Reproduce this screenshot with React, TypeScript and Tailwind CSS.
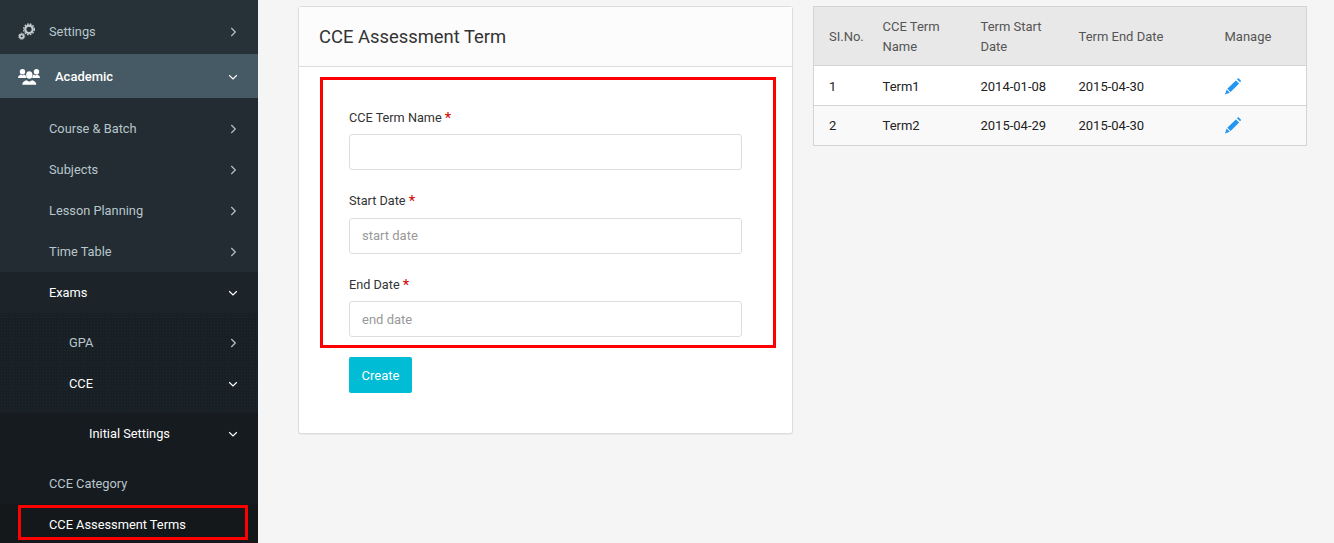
import React from "react";

const Chev = ({ open, white }: { open?: boolean; white?: boolean }) => (
  <svg width="12" height="12" viewBox="0 0 12 12" fill="none" stroke={white ? "#ffffff" : "#b4c3ca"} strokeWidth="1.2" className="shrink-0">
    {open ? <path d="M2.2 4.3 6 8l3.800-3.700" /> : <path d="M4.300 2 8.300 6l-4 4" />}
  </svg>
);

const Gears = () => (
  <svg width="18" height="18" viewBox="0 0 18 18" className="shrink-0">
    <g fill="none" stroke="#c3ccd1">
      <circle cx="11" cy="6.300" r="3.700" strokeWidth="2.200" />
      <circle cx="11" cy="6.300" r="5.300" strokeWidth="1.400" strokeDasharray="1.700 1.100" />
      <circle cx="3.700" cy="13.300" r="1.900" strokeWidth="1.700" />
      <circle cx="3.700" cy="13.300" r="3.100" strokeWidth="1" strokeDasharray="1.100 0.800" />
    </g>
  </svg>
);

const Users = () => (
  <svg width="22" height="16" viewBox="0 0 22 16" fill="#ffffff" className="shrink-0">
    <circle cx="4.500" cy="2.700" r="2.700" />
    <path d="M0 9c0-2 1.500-3 3-3.500l1.500 1 1.500-1c1.500.5 3 1.500 3 3.500z" />
    <circle cx="18.500" cy="2.700" r="2.700" />
    <path d="M22 9c0-2-1.500-3-3-3.500l-1.500 1-1.500-1c-1.500.5-3 1.500-3 3.500z" />
    <g stroke="#455a64" strokeWidth="1" paintOrder="stroke">
      <ellipse cx="11.300" cy="6" rx="3.200" ry="3.800" />
      <path d="M4.300 15.800c0-3 2.200-4 4.200-4.600l2.800 1.500 2.800-1.500c2 .6 4.200 1.600 4.200 4.600z" />
    </g>
  </svg>
);

const Pencil = ({ className }: { className?: string }) => (
  <svg width="18" height="17" viewBox="0 0 18 17" fill="#2196f3" className={`-ml-[1px] shrink-0 ${className ?? ""}`}>
    <path d="M3.300 10.700 11.900 2.400l3.200 3.200-8.500 8.400z" />
    <path d="M2.600 11.500 5.800 14.700 1 16.400z" />
    <path d="M13 1.300 14.300 0 17.200 2.900 16 4.200z" />
  </svg>
);

const Row = ({ label, indent = "pl-[49px]", open, white }: { label: string; indent?: string; open?: boolean; white?: boolean }) => (
  <div className={`flex h-[41px] items-center justify-between pr-[19px] text-[12.8px] ${indent} ${white ? "text-white" : "text-[#b9c6cc]"}`}>
    <span>{label}</span>
    {open !== undefined && <Chev open={open} white={white} />}
  </div>
);

const Field = ({ label, placeholder, className, labelClass, inputClass }: { label: string; placeholder?: string; className?: string; labelClass: string; inputClass?: string }) => (
  <div className={`flex flex-col ${className ?? ""}`}>
    <label className={`h-[20px] text-[12.7px] leading-[22px] text-[#333333] ${labelClass}`}>
      {label} <span className="align-[-1px] text-[15px] leading-none text-[#d50000]">*</span>
    </label>
    <input
      placeholder={placeholder}
      className={`h-[36px] rounded-[3px] border border-[#dddddd] bg-white px-[12px] text-[13px] placeholder:text-[#999999] ${inputClass ?? ""}`}
    />
  </div>
);

const rows = [
  ["1", "Term1", "2014-01-08", "2015-04-30"],
  ["2", "Term2", "2015-04-29", "2015-04-30"],
];

export default function App() {
  return (
    <div className="flex h-[543px] overflow-hidden bg-[#f5f5f5] font-['Roboto',sans-serif] text-[13px]">
      <aside className="w-[258px] shrink-0 overflow-hidden bg-[#263238]">
        <div className="flex h-[54px] items-center justify-between pt-[9px] pl-[18px] pr-[19px] text-[#b9c6cc]">
          <div className="flex items-center gap-[13px]">
            <Gears />
            <span className="text-[12.8px]">Settings</span>
          </div>
          <Chev />
        </div>
        <div className="flex h-[44px] items-center justify-between bg-[#455a64] pt-[1px] pl-[18px] pr-[19px] font-medium text-white">
          <div className="flex items-center gap-[15px]">
            <Users />
            <span>Academic</span>
          </div>
          <Chev open white />
        </div>
        <div className="bg-[#222c32] pt-[10px]">
          <Row label="Course & Batch" open={false} />
          <Row label="Subjects" open={false} />
          <Row label="Lesson Planning" open={false} />
          <Row label="Time Table" open={false} />
          <div className="bg-[#1c2329]">
            <Row label="Exams" open white />
            <div className="bg-[#192025] bg-[radial-gradient(#1f2930_0.6px,transparent_0.7px)] bg-[length:3px_3px] py-[9px]">
              <Row label="GPA" indent="pl-[69px]" open={false} />
              <Row label="CCE" indent="pl-[69px]" open white />
            </div>
            <div className="bg-[#161b1f]">
              <Row label="Initial Settings" indent="pl-[89px]" open white />
              <div className="pt-[9px]">
                <Row label="CCE Category" />
                <div className="relative bg-[#14181b]">
                  <Row label="CCE Assessment Terms" white />
                  <div className="absolute left-[18px] top-[1px] h-[35px] w-[230px] border-[3px] border-[#ff0000]" />
                </div>
              </div>
            </div>
          </div>
        </div>
      </aside>

      <main className="flex items-start gap-[20px] pl-[40px] pt-[6px]">
        <section className="relative h-[428px] w-[495px] rounded-[3px] border border-[#dddddd] bg-white shadow-[0_1px_1px_rgba(0,0,0,0.05)]">
          <header className="flex h-[60px] items-center border-b border-[#dddddd] bg-[#fcfcfc] pt-[1px] pl-[20px] text-[18.4px] text-[#333333]">
            CCE Assessment Term
          </header>
          <div className="px-[50px] pt-[40px]">
            <Field label="CCE Term Name" labelClass="mb-[7px]" />
            <Field label="Start Date" placeholder="start date" className="mt-[20px]" labelClass="mb-[8px]" inputClass="pb-[2px]" />
            <Field label="End Date" placeholder="end date" className="mt-[20px]" labelClass="mb-[7px]" />
            <button className="mt-[20px] h-[36px] w-[63px] rounded-[2px] bg-[#00bcd4] pt-[2px] text-white">Create</button>
          </div>
          <div className="pointer-events-none absolute left-[21px] top-[70px] h-[271px] w-[456px] border-[3px] border-[#ff0000]" />
        </section>

        <table className="w-[494px] table-fixed border-collapse border border-[#d4d4d4] text-left">
          <colgroup>
            <col className="w-[54px]" />
            <col className="w-[98px]" />
            <col className="w-[98px]" />
            <col className="w-[146px]" />
            <col />
          </colgroup>
          <thead className="bg-[#e8e8e8] text-[#555555]">
            <tr className="h-[59px] border-b border-[#d4d4d4]">
              <th className="pt-[1px] pl-[15px] font-normal">SI.No.</th>
              <th className="pt-[1px] pl-[15px] pr-[10px] font-normal leading-[20px]">CCE Term Name</th>
              <th className="pt-[1px] pl-[15px] pr-[10px] font-normal leading-[20px]">Term Start Date</th>
              <th className="pt-[1px] pl-[15px] font-normal">Term End Date</th>
              <th className="pt-[1px] pl-[15px] font-normal">Manage</th>
            </tr>
          </thead>
          <tbody className="text-[#222222]">
            {rows.map((r, i) => (
              <tr key={r[0]} className={`h-[40px] border-b border-[#d4d4d4] ${i % 2 ? "bg-[#f9f9f9]" : "bg-white"}`}>
                {r.map((c) => (
                  <td key={c} className={`pl-[15px] ${i === 0 ? "pt-[2px]" : ""}`}>{c}</td>
                ))}
                <td className={`pl-[15px] ${i === 0 ? "pt-[2px]" : ""}`}>
                  <Pencil />
                </td>
              </tr>
            ))}
          </tbody>
        </table>
      </main>
    </div>
  );
}
